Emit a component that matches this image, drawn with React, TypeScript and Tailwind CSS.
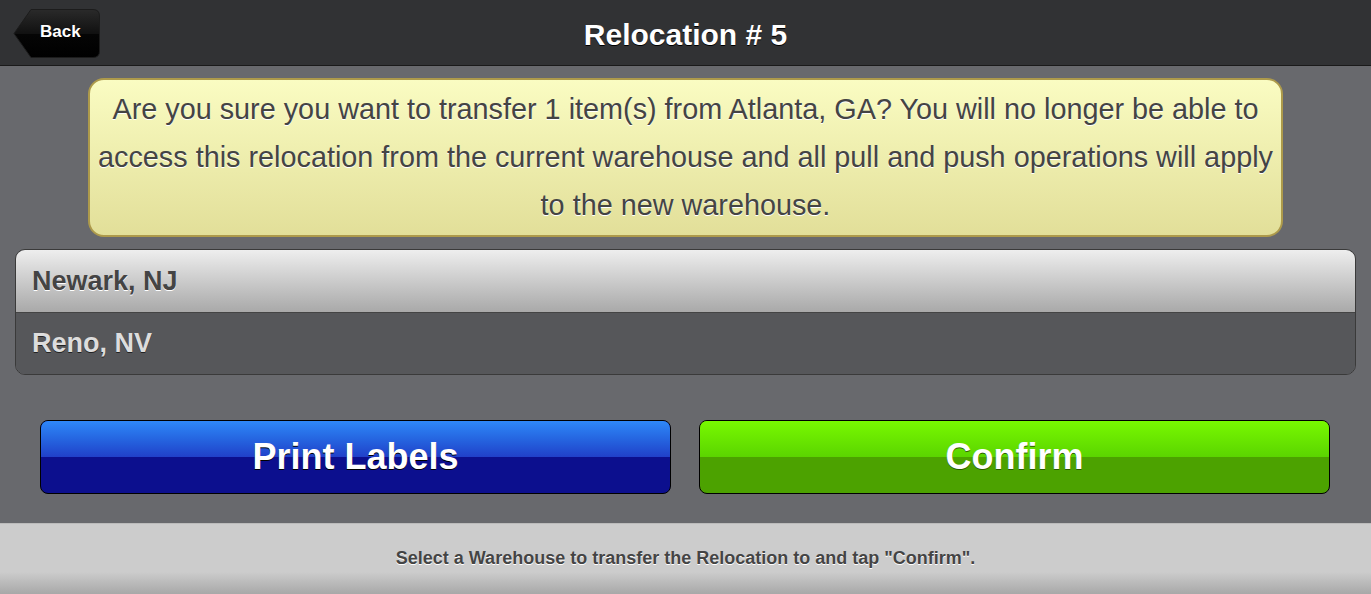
import React from 'react';

// Warehouses the relocation can be moved to
const warehouses = [
    { name: 'Newark, NJ', selected: true },
    { name: 'Reno, NV', selected: false },
];

const font = 'font-["Liberation_Sans",Arial,sans-serif]';

// jQuery-mobile style back button, shape drawn as svg
const BackButton: React.FC = () => (
    <button className="relative h-[49px] w-[87px] text-left">
        <svg className="absolute inset-0" width="87" height="49" viewBox="0 0 87 49">
            <defs>
                <linearGradient id="backGrad" x1="0" y1="0" x2="0" y2="1">
                    <stop offset="0" stopColor="#2a2a2a" />
                    <stop offset="0.5" stopColor="#111111" />
                    <stop offset="0.52" stopColor="#050505" />
                    <stop offset="1" stopColor="#000000" />
                </linearGradient>
            </defs>
            <path
                d="M1 24.5 L18 0.5 H80 Q86.5 0.5 86.5 7 V42 Q86.5 48.5 80 48.5 H18 Z"
                fill="url(#backGrad)"
                stroke="#1c1c1c"
            />
        </svg>
        <span className="absolute left-[27px] top-[10px] text-[17px] font-bold text-white [text-shadow:0_1px_0_#000]">
            Back
        </span>
    </button>
);

export default function App() {
    return (
        <div className={`${font} flex h-[594px] w-full flex-col overflow-hidden bg-[#68696d]`}>
            {/* header */}
            <div className="relative flex h-[66px] shrink-0 items-center justify-center border-b border-[#1a1a1a] bg-[#313234] pt-[3px]">
                <div className="absolute left-[13px] top-[9px]">
                    <BackButton />
                </div>
                <h1 className="text-[30px] font-bold text-white [text-shadow:0_1px_0_#000]">Relocation # 5</h1>
            </div>

            {/* content */}
            <div className="flex flex-1 flex-col pt-[12px]">
                <div className="mx-auto w-[1195px] rounded-[16px] border-[2.5px] border-[#ad9a4b] bg-gradient-to-b from-[#fafcc2] to-[#e2df99] px-[6px] pt-[5px] pb-[6px] text-center text-[28.8px] leading-[48px] text-[#444] [text-shadow:0_1px_0_#fff]">
                    Are you sure you want to transfer 1 item(s) from Atlanta, GA? You will no longer be able to access
                    this relocation from the current warehouse and all pull and push operations will apply to the new
                    warehouse.
                </div>

                <ul className="mx-[15px] mt-[12px] overflow-hidden rounded-[10px] border border-[#3a3a3a]">
                    {warehouses.map((w, i) => (
                        <li
                            key={w.name}
                            className={
                                (i > 0 ? 'border-t border-[#444] ' : '') +
                                (w.selected
                                    ? 'bg-gradient-to-b from-[#eeeeee] to-[#a9a9a9] text-[#444] [text-shadow:0_1px_0_#fff]'
                                    : 'bg-[#56575a] text-[#dddddd] [text-shadow:0_1px_0_#222]') +
                                ' flex h-[62px] items-center px-4 text-[27px] font-bold'
                            }
                        >
                            {w.name}
                        </li>
                    ))}
                </ul>

                <div className="mt-[45px] flex gap-[28px] pl-[40px] pr-[41px]">
                    <button className="relative flex h-[74px] flex-1 items-center justify-center overflow-hidden rounded-[8px] border border-black bg-[#0c0f8e] text-[36px] font-bold text-white [text-shadow:0_1px_0_#000]">
                        <span className="absolute inset-x-0 top-0 h-1/2 bg-gradient-to-b from-[#2f88f8] to-[#2140c9]" />
                        <span className="relative">Print Labels</span>
                    </button>
                    <button className="relative flex h-[74px] flex-1 items-center justify-center overflow-hidden rounded-[8px] border border-black bg-[#4ca200] text-[36px] font-bold text-white [text-shadow:0_1px_0_#2a5a00]">
                        <span className="absolute inset-x-0 top-0 h-1/2 bg-gradient-to-b from-[#78f900] to-[#5bd500]" />
                        <span className="relative">Confirm</span>
                    </button>
                </div>
            </div>

            {/* footer */}
            <div className="flex h-[71px] shrink-0 flex-col border-t border-[#bbbbbb] bg-[#cccccc]">
                <div className="flex h-[48px] items-end justify-center pb-0 text-[18px] font-bold text-[#444] [text-shadow:0_1px_0_#fff]">
                    Select a Warehouse to transfer the Relocation to and tap "Confirm".
                </div>
                <div className="flex-1 bg-gradient-to-b from-[#cccccc] to-[#a8a8a8]" />
            </div>
        </div>
    );
}
